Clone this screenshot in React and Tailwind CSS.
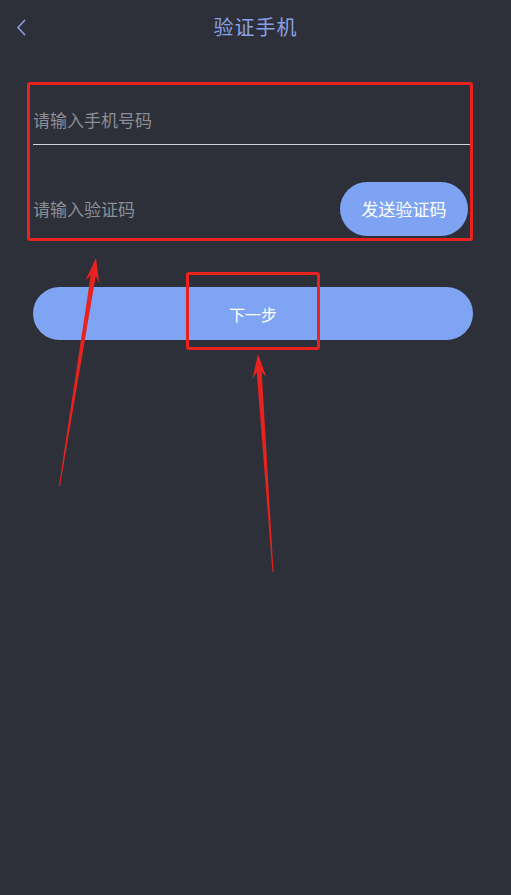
import React from 'react';

const font = { fontFamily: '"Noto Sans CJK SC", "Noto Sans", sans-serif' };

const Annotations = () => (
    <div className="pointer-events-none absolute inset-0">
        <div className="absolute left-[27px] top-[82px] w-[446px] h-[159px] border-[3px] border-[#e8231f] rounded-[3px]" />
        <div className="absolute left-[186px] top-[272px] w-[134px] h-[78px] border-[3px] border-[#e8231f] rounded-[3px]" />
        <svg className="absolute inset-0" width="511" height="895" viewBox="0 0 511 895">
            <polygon
                fill="#e8231f"
                points="60,486 95.7,276.2 99.2,282.8 96,258 85.4,280.6 90.7,275.4 59,486"
            />
            <polygon
                fill="#e8231f"
                points="273.5,572 261.7,371.8 266.6,377.4 258,354 252.6,378.4 256.7,372.2 272.5,572"
            />
        </svg>
    </div>
);

const App = () => {
    return (
        <div className="relative min-h-[895px] w-[511px] bg-[#2e3039]" style={font}>
            <div className="h-[54px] flex items-center px-[14px]">
                <button className="w-[14px] h-[20px] flex items-center justify-center">
                    <svg width="10" height="17" viewBox="0 0 10 17" fill="none">
                        <path d="M8.5 1.5 L2 8.5 L8.5 15.5" stroke="#8a98d6" strokeWidth="1.8" strokeLinecap="round" strokeLinejoin="round" />
                    </svg>
                </button>
                <h1 className="flex-1 text-center text-[20px] text-[#87a0e4] mr-[14px] tracking-[1px]">验证手机</h1>
            </div>

            <div className="ml-[33px] w-[440px] mt-[41px]">
                <div className="h-[50px] flex items-center border-b border-[#d2d3d8]">
                    <span className="text-[17px] text-[#8b8e97]">请输入手机号码</span>
                </div>
                <div className="pt-[37px] flex items-center">
                    <span className="text-[17px] text-[#8b8e97]">请输入验证码</span>
                    <button className="ml-auto mr-[5px] w-[128px] h-[54px] rounded-full bg-[#7ea3f2] text-white text-[17px]">
                        发送验证码
                    </button>
                </div>

                <button className="mt-[51px] w-full h-[53px] rounded-full bg-[#7fa4f3] text-white text-[16px]">
                    下一步
                </button>
            </div>

            <Annotations />
        </div>
    );
};

export default App;
